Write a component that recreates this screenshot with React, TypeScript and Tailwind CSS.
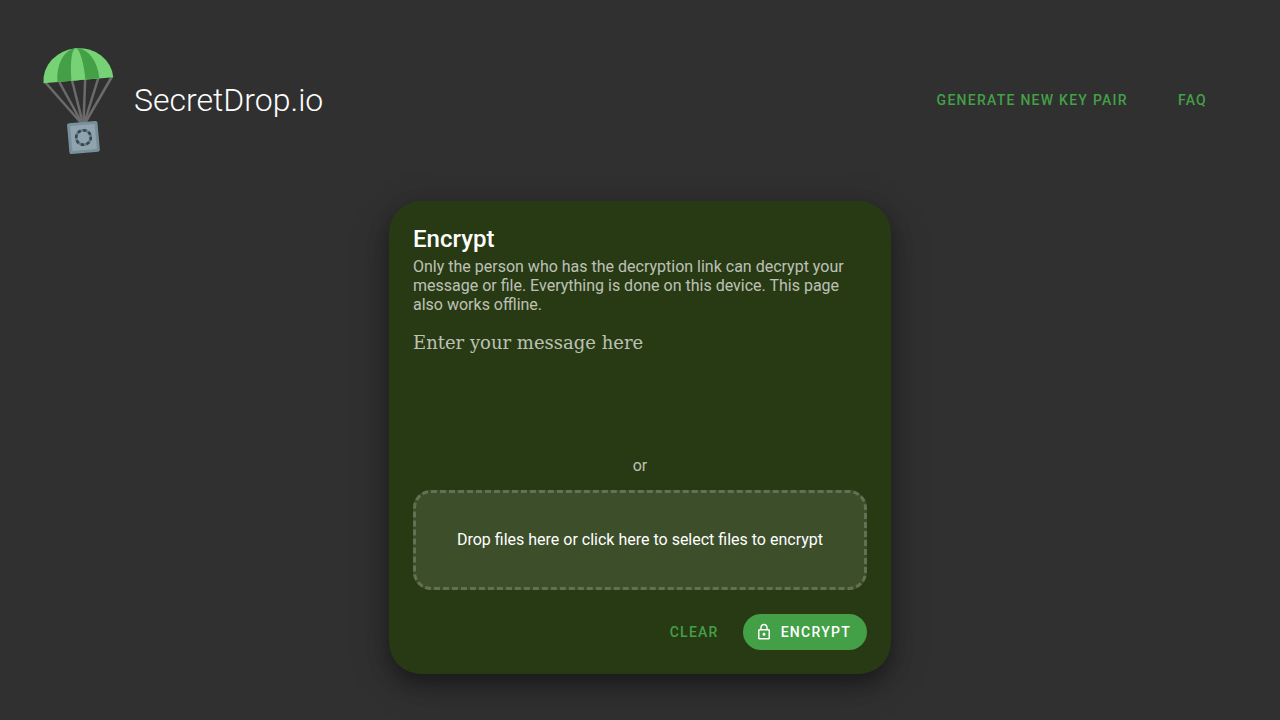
import { useRef, useState } from 'react';

function Logo() {
  return (
    <svg className="h-28 w-20 shrink-0" viewBox="40 44 80 112" aria-hidden="true">
      <g stroke="#6b6b6b" strokeWidth="2.5" fill="none">
        <path d="M45 82 82 124" />
        <path d="M58.500 80.500 82.400 124" />
        <path d="M71.800 79.500 83 124" />
        <path d="M85.200 78.500 83.500 124" />
        <path d="M98.500 77.500 84 124" />
        <path d="M112 76.500 84.500 124" />
      </g>
      <g transform="rotate(-5 78.4 80.2)">
        <path d="M43.400 80.200A35 32 0 0 1 113.400 80.200Z" fill="#76d275" />
        <path d="M57.400 80.200A21 32 0 0 1 99.400 80.200Z" fill="#43a047" />
        <path d="M71.400 80.200A7 32 0 0 1 85.400 80.200Z" fill="#76d275" />
      </g>
      <g transform="rotate(-5 83.4 137.5)">
        <rect x="68.200" y="122" width="30.500" height="31" rx="2" fill="#78909c" />
        <rect x="71.200" y="125" width="24.500" height="25" rx="1" fill="#90a4ae" />
        <circle cx="83.500" cy="137.500" r="7.300" fill="none" stroke="#607d8b" strokeWidth="2.600" />
        <circle cx="83.500" cy="137.500" r="7.300" fill="none" stroke="#37474f" strokeWidth="2.600" strokeDasharray="3.200 2.533" />
      </g>
    </svg>
  );
}

function LockIcon() {
  return (
    <svg className="size-[18px]" viewBox="0 0 24 24" fill="currentColor" aria-hidden="true">
      <path d="M12 17c1.100 0 2-.9 2-2s-.9-2-2-2-2 .9-2 2 .9 2 2 2zm6-9h-1V6c0-2.760-2.240-5-5-5S7 3.240 7 6v2H6c-1.100 0-2 .9-2 2v10c0 1.100.9 2 2 2h12c1.100 0 2-.9 2-2V10c0-1.100-.9-2-2-2zM8.900 6c0-1.710 1.390-3.100 3.100-3.100s3.100 1.390 3.100 3.100v2H8.900V6zM18 20H6V10h12v10z" />
    </svg>
  );
}

export default function App() {
  const [message, setMessage] = useState('');
  const fileInput = useRef<HTMLInputElement>(null);

  return (
    <div className="min-h-screen bg-[#303030] pb-11 font-['Roboto',sans-serif] text-white">
      <header className="flex flex-wrap items-center justify-between pt-11 pr-[65px] pl-10">
        <a href="#home" className="flex items-center gap-3.5">
          <Logo />
          <h1 className="text-[32px] leading-10 font-light">SecretDrop.io</h1>
        </a>
        <nav className="flex gap-[34px] text-sm leading-[18px] font-medium tracking-[0.09em] text-[#43a047] uppercase">
          <a href="#generate" className="px-2 py-2">Generate new key pair</a>
          <a href="#faq" className="px-2 py-2">FAQ</a>
        </nav>
      </header>

      <main className="mx-auto mt-[45px] w-full max-w-[502px]">
        <form
          onSubmit={(event) => event.preventDefault()}
          className="flex flex-col rounded-[32px] bg-[#283a13] p-6 shadow-[0_10px_20px_rgba(0,0,0,0.35),0_10px_44px_rgba(0,0,0,0.2)]"
        >
          <h2 className="text-2xl leading-7 font-medium">Encrypt</h2>
          <p className="mt-1 text-base leading-[19px] text-white/70">
            Only the person who has the decryption link can decrypt your message or file.
            Everything is done on this device. This page also works offline.
          </p>
          <textarea
            aria-label="Message"
            placeholder="Enter your message here"
            value={message}
            onChange={(event) => setMessage(event.target.value)}
            className="mt-4 h-[110px] w-full resize-none bg-transparent font-['Roboto_Slab','DejaVu_Serif',serif] text-lg leading-[26px] outline-none placeholder:text-white/70"
          />
          <p className="mt-4 text-center text-base leading-[19px] text-white/70">or</p>
          <button
            type="button"
            onClick={() => fileInput.current?.click()}
            className="mt-[15px] h-[100px] rounded-[18px] border-3 border-dashed border-white/20 bg-white/10 px-4 text-base"
          >
            Drop files here or click here to select files to encrypt
          </button>
          <input ref={fileInput} type="file" multiple hidden aria-label="Files to encrypt" />
          <div className="mt-6 flex justify-end gap-4 text-sm leading-[18px] font-medium">
            <button
              type="button"
              onClick={() => setMessage('')}
              className="h-9 px-2 tracking-[0.09em] text-[#43a047] uppercase"
            >
              Clear
            </button>
            <button
              type="submit"
              className="flex h-9 items-center gap-2 rounded-full bg-[#43a047] pr-4 pl-3 tracking-[0.09em] uppercase"
            >
              <LockIcon />
              Encrypt
            </button>
          </div>
        </form>
      </main>
    </div>
  );
}
